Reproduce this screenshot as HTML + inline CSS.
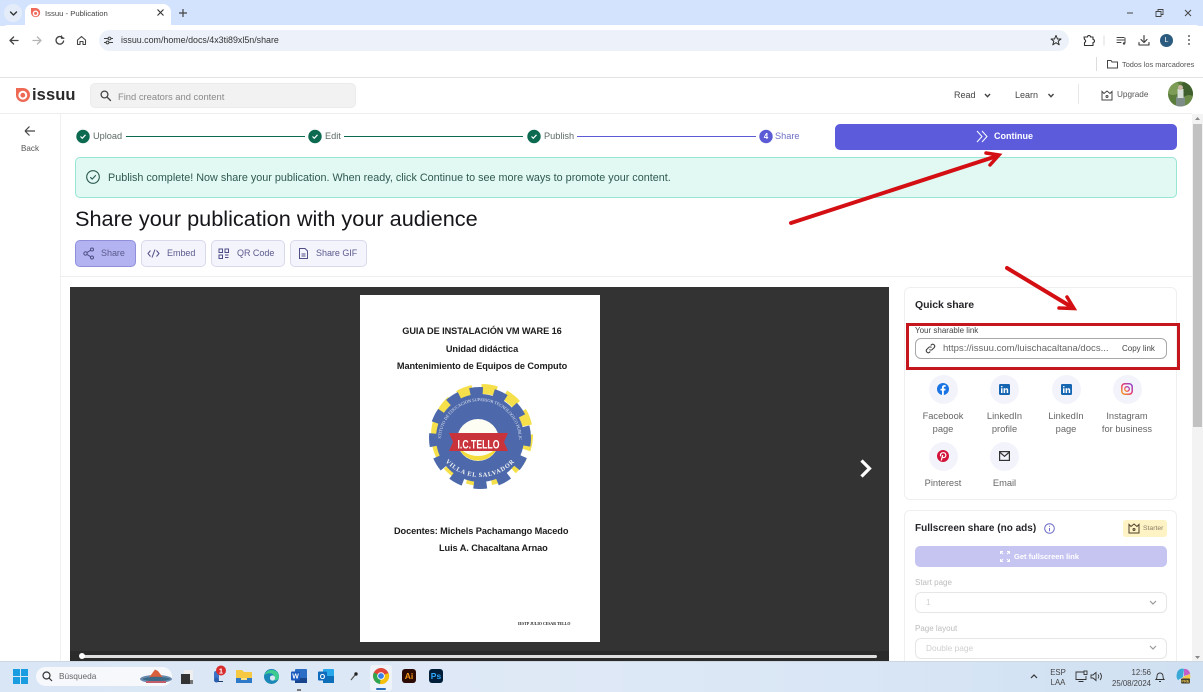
<!DOCTYPE html>
<html lang="en"><head><meta charset="utf-8"><title>Issuu - Publication</title>
<style>
html,body{margin:0;padding:0;width:1203px;height:692px;overflow:hidden;background:#fff;font-family:"Liberation Sans",sans-serif}
div,span,a{position:absolute;box-sizing:border-box;white-space:nowrap}
svg{position:absolute;overflow:visible}
.t{line-height:1;color:#555}
.c{text-align:center}
.ico{fill:none;stroke:#444;stroke-width:1.3;stroke-linecap:round;stroke-linejoin:round}
.tab{top:240px;height:27px;border-radius:5px;background:#f4f4fd;border:1px solid #d9d9ec}
.tl{font-size:9px;top:249px;color:#5b5a8c;letter-spacing:-.03px}
.step{font-size:9.2px;top:132px;color:#5d6b66}
.lab{font-size:9.3px;color:#666;text-align:center;width:70px;line-height:13px}
.circ{width:29px;height:29px;border-radius:50%;background:#f3f3fb}
.sel{left:915px;width:252px;height:21px;border:1px solid #e6e6e6;border-radius:6px;background:#fff}
.doc{font-size:9.2px;font-weight:bold;color:#1c1c1c;letter-spacing:-.08px}
</style></head><body>

<!-- browser chrome -->
<div style="left:0;top:0;width:1203px;height:26px;background:#d3e3fd"></div>
<div style="left:4px;top:4px;width:18px;height:18px;border-radius:50%;background:#e4ecf9"></div>
<svg style="left:9px;top:9px" width="9" height="9" class="ico"><path d="M1.5 3L4.5 6L7.5 3" stroke-width="1.4" stroke="#333" fill="none"/></svg>
<div style="left:25px;top:4px;width:146px;height:23px;background:#fff;border-radius:8px 8px 0 0"></div>
<svg style="left:30px;top:7px" width="11" height="12" viewBox="0 0 11 12"><path d="M1 1H6A4.6 4.6 0 1 1 1 6Z" fill="#ef6a5a"/><circle cx="5.6" cy="6.4" r="2.9" fill="#fff"/><circle cx="5.6" cy="6.4" r="1.5" fill="#ef6a5a"/></svg>
<span class="t" style="left:45px;top:9.500px;font-size:7.700px;color:#444">Issuu - Publication</span>
<svg style="left:157px;top:9px" width="7" height="7"><path d="M.5 .5L6.500 6.500M6.500 .5L.5 6.500" stroke="#333" stroke-width="1.100"/></svg>
<svg style="left:178px;top:8px" width="10" height="10"><path d="M5 1V9M1 5H9" stroke="#444" stroke-width="1.200"/></svg>
<svg style="left:1127px;top:8px" width="66" height="10"><path d="M0 5H6" stroke="#444" stroke-width="1"/><path d="M29 3.500h5v5h-5zM31 3.500v-2h5v5h-2" fill="none" stroke="#444" stroke-width=".9"/><path d="M58 2l6 6M64 2l-6 6" stroke="#444" stroke-width="1"/></svg>

<div style="left:0;top:25px;width:1203px;height:53px;background:#fff;border-radius:8px 8px 0 0"></div>
<svg style="left:9px;top:35px" width="80" height="11" viewBox="0 0 80 11" class="ico"><path d="M1 5.500H9M1 5.500L4.600 2M1 5.500L4.600 9" stroke="#444"/><path d="M24 5.500H32M32 5.500L28.400 2M32 5.500L28.400 9" stroke="#b5b5b5"/><path d="M53.500 2.600A3.800 3.800 0 1 0 54.600 6" stroke="#444"/><path d="M52.500 1V3.200H54.800" stroke="#444"/><path d="M68.500 5L72.500 1.500L76.500 5V9.500H74V6.500H71V9.500H68.500Z" stroke="#444" stroke-width="1.100"/></svg>
<div style="left:99px;top:30px;width:970px;height:21px;background:#edf2fa;border-radius:11px"></div>
<svg style="left:104px;top:36px" width="9" height="9" stroke="#444" fill="none" stroke-width="1"><path d="M0 2.500H4M7 2.500H9M0 6.500H2M5 6.500H9"/><circle cx="5.500" cy="2.500" r="1.400"/><circle cx="3.500" cy="6.500" r="1.400"/></svg>
<span class="t" style="left:121px;top:36px;font-size:8.900px;color:#333">issuu.com/home/docs/4x3ti89xl5n/share</span>
<svg style="left:1050px;top:34px" width="145" height="13" viewBox="0 0 145 13" class="ico"><path d="M6 1.500L7.500 5H11L8.200 7.200L9.200 10.800L6 8.700L2.800 10.800L3.800 7.200L1 5H4.500Z" stroke="#333" stroke-width="1"/><path d="M34 3H37.500C37.500 1 40.500 1 40.500 3H43V5.500C45 5.500 45 8.500 43 8.500V11.500H34.500V8.500C36 8 36 6 34.500 5.500Z" stroke="#333" stroke-width="1.100"/><path d="M54 2V11" stroke="#ddd" stroke-width="1"/><path d="M67 3.500H74M67 6H74M67 8.500H71" stroke="#444" stroke-width="1"/><path d="M75 4V9" stroke="#444" stroke-width="1"/><circle cx="74" cy="9.500" r="1.200" fill="#444" stroke="none"/><path d="M94 1.500V8M91 5.500L94 8.500L97 5.500M89 8.500V11H99V8.500" stroke="#333" stroke-width="1.100"/><circle cx="139" cy="2" r=".9" fill="#333" stroke="none"/><circle cx="139" cy="6" r=".9" fill="#333" stroke="none"/><circle cx="139" cy="10" r=".9" fill="#333" stroke="none"/></svg>
<div style="left:1160px;top:34px;width:13px;height:13px;border-radius:50%;background:#2b5b7e;color:#fff;font-size:7px;line-height:13px;text-align:center">L</div>
<div style="left:1096px;top:57px;width:1px;height:14px;background:#ddd"></div>
<svg style="left:1107px;top:59px" width="11" height="10"><path d="M.5 1.500H4L5 3H10.500V9H.5Z" fill="none" stroke="#444"/></svg>
<span class="t" style="left:1122px;top:60.500px;font-size:7.400px;color:#555">Todos los marcadores</span>
<div style="left:0;top:77px;width:1203px;height:1px;background:#e4e4e4"></div>

<!-- site header -->
<svg style="left:15px;top:87px" width="15" height="16" viewBox="0 0 15 16"><path d="M1 1H8A7 7 0 1 1 1 8Z" fill="#ee6a55"/><circle cx="7.800" cy="8.200" r="4.400" fill="#fff"/><circle cx="7.800" cy="8.200" r="2.400" fill="#ee6a55"/></svg>
<span class="t" style="left:32px;top:87px;font-size:16.500px;font-weight:bold;color:#2b2b2b;letter-spacing:.1px">issuu</span>
<div style="left:90px;top:83px;width:266px;height:25px;background:#f2f2f2;border:1px solid #ebebeb;border-radius:5px"></div>
<svg style="left:100px;top:90px" width="11" height="11" fill="none" stroke="#444" stroke-width="1.300"><circle cx="4.500" cy="4.500" r="3.400"/><path d="M7 7L10.500 10.500" stroke-linecap="round"/></svg>
<span class="t" style="left:118px;top:91.500px;font-size:9.400px;color:#8a8a8a">Find creators and content</span>
<span class="t" style="left:954px;top:91px;font-size:9px;color:#444">Read</span>
<span class="t" style="left:1015px;top:91px;font-size:9px;color:#444">Learn</span>
<svg style="left:984px;top:93px" width="72" height="6" fill="none" stroke="#444" stroke-width="1.400"><path d="M1 1L3.500 3.700L6 1M64.500 1L67 3.700L69.500 1"/></svg>
<div style="left:1078px;top:84px;width:1px;height:20px;background:#e8e8e8"></div>
<svg style="left:1101px;top:90px" width="12" height="11" viewBox="0 0 12 11" fill="none" stroke="#444" stroke-width="1"><path d="M1 1.500L3 3.500L6 1L9 3.500L11 1.500V10H1Z"/><circle cx="6" cy="6.500" r="1"/></svg>
<span class="t" style="left:1117px;top:91px;font-size:8.200px;color:#555">Upgrade</span>
<svg style="left:1168px;top:81px" width="25" height="26" viewBox="0 0 25 26"><defs><clipPath id="av"><circle cx="12.500" cy="13" r="12.500"/></clipPath></defs><g clip-path="url(#av)"><rect width="25" height="26" fill="#5b7d3c"/><circle cx="5" cy="7" r="7" fill="#7d9c55"/><circle cx="20" cy="8" r="8" fill="#3f5f2c"/><circle cx="21" cy="20" r="6" fill="#6b8c47"/><rect x="8" y="16" width="9" height="10" fill="#7d8c86"/><rect x="9.500" y="8" width="6" height="9" fill="#d8dfd8"/><circle cx="12.500" cy="6.500" r="2.500" fill="#c9b7a3"/></g></svg>
<div style="left:0;top:113px;width:1192px;height:1px;background:#eee"></div>

<!-- sidebar -->
<div style="left:60px;top:114px;width:1px;height:547px;background:#f0f0f0"></div>
<svg style="left:24px;top:125px" width="12" height="12" fill="none" stroke="#444" stroke-width="1.200"><path d="M1 6H11M1 6L5.500 1.500M1 6L5.500 10.500"/></svg>
<span class="t" style="left:21px;top:145px;font-size:8.100px;color:#555">Back</span>

<!-- stepper -->
<svg style="left:76px;top:129px" width="700" height="15" viewBox="0 0 700 15">
<path d="M50 7.500H229M268 7.500H447" stroke="#0c6a50" stroke-width="1"/><path d="M501 7.500H680" stroke="#5b5bd6" stroke-width="1"/>
<circle cx="7" cy="7.500" r="6.700" fill="#0c6a50"/><circle cx="239" cy="7.500" r="6.700" fill="#0c6a50"/><circle cx="458" cy="7.500" r="6.700" fill="#0c6a50"/>
<path d="M4.500 7.500L6.300 9.300L9.500 5.800M236.500 7.500L238.300 9.300L241.500 5.800M455.500 7.500L457.300 9.300L460.500 5.800" fill="none" stroke="#fff" stroke-width="1.200"/>
<circle cx="690" cy="7.500" r="6.700" fill="#5b5bd6"/></svg>
<span class="t" style="left:762px;top:132.500px;width:8px;text-align:center;font-size:8px;font-weight:bold;color:#fff">4</span>
<span class="t step" style="left:93px">Upload</span>
<span class="t step" style="left:325px">Edit</span>
<span class="t step" style="left:544px">Publish</span>
<span class="t step" style="left:775px;color:#6f6fc8">Share</span>
<div style="left:835px;top:124px;width:342px;height:26px;background:#5b5bdc;border-radius:5px"></div>
<svg style="left:976px;top:130px" width="12" height="13" fill="none" stroke="#fff" stroke-width="1"><path d="M1 1L6 6.500L1 12M6 1L11 6.500L6 12"/></svg>
<span class="t" style="left:994px;top:132px;font-size:9px;color:#fff;font-weight:bold">Continue</span>

<!-- alert -->
<div style="left:75px;top:157px;width:1102px;height:41px;background:#e2f8f3;border:1px solid #96e6d3;border-radius:5px"></div>
<svg style="left:86px;top:170px" width="14" height="14" fill="none" stroke="#27564a" stroke-width="1.100"><circle cx="7" cy="7" r="6.300"/><path d="M4.300 7.200L6.200 9.100L9.800 5.300"/></svg>
<span class="t" style="left:108px;top:172.500px;font-size:10.800px;color:#2f5a50">Publish complete! Now share your publication. When ready, click Continue to see more ways to promote your content.</span>

<span class="t" style="left:75px;top:208px;font-size:21.700px;color:#15151a">Share your publication with your audience</span>

<!-- tabs -->
<div class="tab" style="left:75px;width:61px;background:#b3b3f2;border-color:#8f8fdc"></div>
<div class="tab" style="left:141px;width:65px"></div>
<div class="tab" style="left:211px;width:74px"></div>
<div class="tab" style="left:290px;width:77px"></div>
<svg style="left:83px;top:247px" width="275" height="13" viewBox="0 0 275 13" fill="none" stroke="#4f4e86" stroke-width="1">
<circle cx="2.500" cy="6.500" r="1.700"/><circle cx="9" cy="2.500" r="1.500"/><circle cx="9" cy="10.500" r="1.500"/><path d="M4 5.500L7.600 3.300M4 7.500L7.600 9.700"/>
<path d="M67.500 3.500L65 6.500L67.500 9.500M73.500 3.500L76 6.500L73.500 9.500M72 2.500L69 10.500"/>
<path d="M136 2h3.500v3.500H136zM142 2h3.500v3.500H142zM136 8h3.500v3.500H136zM142 8h3.500M142 10.500h3.500"/>
<path d="M216.500 1.500H222L224.500 4V11.500H216.500ZM218.500 7H222.500M218.500 9H222.500"/></svg>
<span class="t tl" style="left:101px">Share</span>
<span class="t tl" style="left:167px">Embed</span>
<span class="t tl" style="left:237px">QR Code</span>
<span class="t tl" style="left:316px">Share GIF</span>
<div style="left:61px;top:276px;width:1131px;height:1px;background:#eee"></div>

<!-- viewer -->
<div style="left:70px;top:287px;width:819px;height:374px;background:#333"></div>
<div style="left:360px;top:295px;width:240px;height:347px;background:#fff"></div>
<span class="t c doc" style="left:360px;width:244px;top:327px">GUIA DE INSTALACIÓN VM WARE 16</span>
<span class="t c doc" style="left:360px;width:244px;top:344.500px">Unidad didáctica</span>
<span class="t c doc" style="left:360px;width:244px;top:362px">Mantenimiento de Equipos de Computo</span>
<span class="t doc" style="left:394px;top:526.500px">Docentes: Michels Pachamango Macedo</span>
<span class="t doc" style="left:439px;top:544px">Luis A. Chacaltana Arnao</span>
<span class="t" style="left:518px;top:623px;font-size:3.900px;font-weight:bold;font-family:'Liberation Serif',serif;color:#222">IESTP JULIO CESAR TELLO</span>

<!-- logo -->
<svg style="left:420px;top:378px" width="120" height="120" viewBox="0 0 120 120">
<defs><path id="arcT" d="M21 62A39 39 0 0 1 99 62"/><path id="arcB" d="M17 52A43 43 0 0 0 103 52"/></defs>
<circle cx="62" cy="57" r="46" fill="none" stroke="#f5e04c" stroke-width="10" stroke-dasharray="15 9"/>
<circle cx="60" cy="60" r="44" fill="#4d69ab"/>
<circle cx="60" cy="60" r="47" fill="none" stroke="#4d69ab" stroke-width="8" stroke-dasharray="13 11" stroke-dashoffset="5"/>
<circle cx="58" cy="62" r="21" fill="#fdfdf4"/>
<path d="M38 68A21 21 0 0 0 78 68A25 25 0 0 1 38 68Z" fill="#f4dc3c"/>
<path d="M29 55H88L84 64L88 73H29L33 64Z" fill="#c9343c"/>
<text x="58.500" y="70.500" text-anchor="middle" font-family="Liberation Sans" font-weight="bold" font-size="12" fill="#fff" textLength="42" lengthAdjust="spacingAndGlyphs">I.C.TELLO</text>
<text font-family="Liberation Serif" font-size="4.300" fill="#e6e9f4"><textPath href="#arcT" startOffset="50%" text-anchor="middle">INSTITUTO DE EDUCACION SUPERIOR TECNOLOGICO PUBLICO</textPath></text>
<text font-family="Liberation Serif" font-size="6.300" font-weight="bold" fill="#f2f2f2" letter-spacing=".4"><textPath href="#arcB" startOffset="50%" text-anchor="middle" dominant-baseline="hanging">VILLA EL SALVADOR</textPath></text>
</svg>

<svg style="left:859px;top:458px" width="14" height="21" fill="none" stroke="#fff" stroke-width="3.200" stroke-linejoin="miter"><path d="M2.500 2.500L10.500 10.500L2.500 18.500"/></svg>
<div style="left:70px;top:651px;width:819px;height:10px;background:#2b2b2b"></div>
<div style="left:82px;top:655px;width:795px;height:3px;background:#dfdfdf;border-radius:2px"></div>
<div style="left:79px;top:653px;width:6px;height:6px;background:#fff;border-radius:50%"></div>

<!-- quick share card -->
<div style="left:904px;top:287px;width:273px;height:213px;border:1px solid #efefef;border-radius:6px;background:#fff"></div>
<span class="t" style="left:915px;top:299.500px;font-size:10.500px;font-weight:bold;color:#25252b;letter-spacing:-.1px">Quick share</span>
<span class="t" style="left:915px;top:327px;font-size:8px;color:#444">Your sharable link</span>
<div style="left:915px;top:338px;width:252px;height:21px;border:1px solid #a8a8a8;border-radius:6px"></div>
<svg style="left:925px;top:343px" width="11" height="11" fill="none" stroke="#444" stroke-width="1.100"><path d="M4.500 6.500A2 2 0 0 0 7.300 6.500L9.300 4.500A2 2 0 0 0 6.500 1.700L5.700 2.500M6.500 4.500A2 2 0 0 0 3.700 4.500L1.700 6.500A2 2 0 0 0 4.500 9.300L5.300 8.500"/></svg>
<span class="t" style="left:943px;top:344px;font-size:9.550px;color:#666">https://issuu.com/luischacaltana/docs...</span>
<span class="t" style="left:1122px;top:344.500px;font-size:8px;color:#444">Copy link</span>
<div style="left:906px;top:323px;width:274px;height:47px;border:3px solid #c4161c"></div>

<div class="circ" style="left:928.500px;top:375px"></div>
<div class="circ" style="left:990px;top:375px"></div>
<div class="circ" style="left:1051.500px;top:375px"></div>
<div class="circ" style="left:1112.500px;top:375px"></div>
<div class="circ" style="left:928.500px;top:442px"></div>
<div class="circ" style="left:990px;top:442px"></div>
<svg style="left:937px;top:383px" width="12" height="12" viewBox="0 0 12 12"><circle cx="6" cy="6" r="6" fill="#1b74e4"/><path d="M6.800 12V7.500H8.300L8.600 5.700H6.800V4.700C6.800 4.100 7.100 3.800 7.700 3.800H8.700V2.300C7 1.900 5 2.200 5 4.500V5.700H3.500V7.500H5V12Z" fill="#fff"/></svg>
<svg style="left:999px;top:384px" width="11" height="11" viewBox="0 0 11 11"><rect width="11" height="11" rx="1.200" fill="#1766b2"/><path d="M2 4.300H3.500V9H2ZM2 2H3.500V3.300H2ZM4.600 4.300H6V5C6.800 3.800 9.200 3.900 9.200 6V9H7.700V6.500C7.700 5 6.100 5.100 6.100 6.500V9H4.600Z" fill="#fff"/></svg>
<svg style="left:1060.500px;top:384px" width="11" height="11" viewBox="0 0 11 11"><rect width="11" height="11" rx="1.200" fill="#1766b2"/><path d="M2 4.300H3.500V9H2ZM2 2H3.500V3.300H2ZM4.600 4.300H6V5C6.800 3.800 9.200 3.900 9.200 6V9H7.700V6.500C7.700 5 6.100 5.100 6.100 6.500V9H4.600Z" fill="#fff"/></svg>
<svg style="left:1121px;top:383px" width="12" height="12" viewBox="0 0 12 12" fill="none"><defs><linearGradient id="ig" x1="0" y1="1" x2="1" y2="0"><stop offset="0" stop-color="#f5a623"/><stop offset=".5" stop-color="#e8386d"/><stop offset="1" stop-color="#8a49d6"/></linearGradient></defs><rect x=".8" y=".8" width="10.400" height="10.400" rx="3" stroke="url(#ig)" stroke-width="1.500"/><circle cx="6" cy="6" r="2.300" stroke="url(#ig)" stroke-width="1.300"/></svg>
<svg style="left:937px;top:450px" width="12" height="12" viewBox="0 0 12 12"><circle cx="6" cy="6" r="6" fill="#d2143a"/><path d="M4.300 10.500L5.700 5M3.700 6.300C2.800 3.500 5 2.500 6.500 2.700C9 3 9.300 5.300 8.400 6.700C7.600 7.900 5.800 7.800 5.300 6.800" fill="none" stroke="#fff" stroke-width="1.200"/></svg>
<svg style="left:999px;top:451px" width="11" height="10" fill="none" stroke="#333" stroke-width="1.200"><rect x=".6" y=".6" width="9.800" height="8.800"/><path d="M.6 1L5.500 5.300L10.400 1"/></svg>
<span class="t lab" style="left:908px;top:410px">Facebook<br>page</span>
<span class="t lab" style="left:969.500px;top:410px">LinkedIn<br>profile</span>
<span class="t lab" style="left:1031px;top:410px">LinkedIn<br>page</span>
<span class="t lab" style="left:1092px;top:410px">Instagram<br>for business</span>
<span class="t lab" style="left:908px;top:477px">Pinterest</span>
<span class="t lab" style="left:969.500px;top:477px">Email</span>

<!-- fullscreen card -->
<div style="left:904px;top:510px;width:273px;height:160px;border:1px solid #efefef;border-radius:6px;background:#fff"></div>
<span class="t" style="left:915px;top:524px;font-size:10px;font-weight:bold;color:#25252b">Fullscreen share (no ads)</span>
<svg style="left:1044px;top:523px" width="11" height="11" fill="none" stroke="#6d6dc8" stroke-width="1"><circle cx="5.500" cy="5.500" r="4.800"/><path d="M5.500 5V8.300M5.500 2.800V3.800"/></svg>
<div style="left:1123px;top:520px;width:44px;height:17px;background:#fdf3c4;border-radius:3px"></div>
<svg style="left:1128px;top:523px" width="12" height="11" viewBox="0 0 12 11" fill="none" stroke="#4b3f2a" stroke-width="1"><path d="M1 1.500L3 3.500L6 1L9 3.500L11 1.500V10H1Z"/><circle cx="6" cy="6.500" r="1"/></svg>
<span class="t" style="left:1143px;top:526px;font-size:6.800px;color:#8c8069">Starter</span>
<div style="left:915px;top:546px;width:252px;height:21px;background:#c6c5f2;border-radius:5px"></div>
<svg style="left:1000px;top:551px" width="10" height="11" fill="none" stroke="#fff" stroke-width="1"><path d="M.5 3V.5H3M7 .5H9.500V3M.5 8V10.500H3M7 10.500H9.500V8M.5 .5L3 3M9.500 .5L7 3M.5 10.500L3 8M9.500 10.500L7 8"/></svg>
<span class="t" style="left:1014px;top:552.500px;font-size:7.500px;font-weight:bold;color:#fff">Get fullscreen link</span>
<span class="t" style="left:915px;top:579px;font-size:8px;color:#bcbcbc">Start page</span>
<div class="sel" style="top:592px"></div>
<span class="t" style="left:926px;top:599px;font-size:8px;color:#d0d0d0">1</span>
<span class="t" style="left:915px;top:625px;font-size:8px;color:#bcbcbc">Page layout</span>
<div class="sel" style="top:638px"></div>
<span class="t" style="left:926px;top:644px;font-size:8.300px;color:#cfcfcf">Double page</span>
<svg style="left:1149px;top:600px" width="8" height="52" fill="none" stroke="#999" stroke-width="1.200"><path d="M1 1L4 4L7 1M1 46L4 49L7 46"/></svg>

<!-- scrollbar -->
<div style="left:1192px;top:114px;width:11px;height:547px;background:#f3f3f3"></div>
<div style="left:1193px;top:124px;width:9px;height:303px;background:#c2c2c2"></div>
<svg style="left:1194px;top:116px" width="7" height="544" fill="#888"><path d="M3.500 1L6 4H1ZM1 540H6L3.500 543Z"/></svg>

<!-- taskbar -->
<div style="left:0;top:661px;width:1203px;height:31px;background:linear-gradient(90deg,#d9e6f5 0,#dfe9f6 45%,#d9e6f5 70%,#cfe0f2 100%);border-top:1px solid #cdd7e2"></div>
<svg style="left:13px;top:669px" width="15" height="15" viewBox="0 0 15 15"><path d="M0 0H7V7H0ZM8 0H15V7H8ZM0 8H7V15H0ZM8 8H15V15H8Z" fill="#1a9de0"/></svg>
<div style="left:36px;top:667px;width:136px;height:19px;background:#f6f8fc;border-radius:10px"></div>
<svg style="left:42px;top:671px" width="11" height="11" fill="none" stroke="#333" stroke-width="1.200"><circle cx="4.500" cy="4.500" r="3.500"/><path d="M7 7L10 10"/></svg>
<span class="t" style="left:59px;top:672px;font-size:8.300px;color:#666">Búsqueda</span>
<svg style="left:140px;top:668px" width="33" height="17" viewBox="0 0 33 17"><ellipse cx="16" cy="11" rx="16" ry="4" fill="#6a8bb0"/><path d="M8 11L15 1.500L18 3L24 11Z" fill="#d9603c"/><path d="M2 11C8 8 24 8 31 11C24 14 8 14 2 11Z" fill="#3d6a86"/><rect x="6" y="13" width="20" height="2" fill="#c25d6e"/></svg>
<svg style="left:181px;top:670px" width="12" height="14"><rect x="3" y="0" width="9" height="11" fill="#eee"/><rect y="4" width="9" height="10" fill="#333"/><rect x="9" y="10" width="3" height="4" fill="#777"/></svg>
<svg style="left:211px;top:665px" width="17" height="19" viewBox="0 0 17 19"><rect x="3" y="6" width="5" height="9" rx="2" fill="#3a74c9"/><circle cx="5.500" cy="15" r="2.500" fill="#2a5fb0"/><rect x="7" y="16" width="5" height="1" fill="#1d3c6b"/><circle cx="10" cy="5.500" r="5" fill="#d92c2c"/><text x="10" y="8.300" text-anchor="middle" font-family="Liberation Sans" font-weight="bold" font-size="7.500" fill="#fff">1</text></svg>
<svg style="left:236px;top:669px" width="16" height="14"><path d="M0 1H6L8 3H16V14H0Z" fill="#f6c945"/><rect y="9" width="16" height="5" fill="#2f79c9"/><rect x="5" y="9" width="6" height="2" fill="#f6e08a"/></svg>
<svg style="left:264px;top:669px" width="15" height="15" viewBox="0 0 15 15"><circle cx="7.500" cy="7.500" r="7.500" fill="#1b86b8"/><path d="M15 8C15 4 12 1 7.500 1C4 1 1 3.500 .5 6C3 3.500 9 3.500 10 7H6C6 11 10 12.500 14 10.500Z" fill="#3ecb8f"/><circle cx="8.500" cy="9" r="2.600" fill="#dbe7f4"/></svg>
<svg style="left:291px;top:669px" width="16" height="14"><rect x="4" y="0" width="12" height="14" rx="1" fill="#2b6cc4"/><rect x="4" y="9" width="12" height="5" fill="#17448c"/><rect width="9" height="9" y="2.500" rx="1" fill="#185abd"/><text x="4.500" y="9.700" text-anchor="middle" font-family="Liberation Sans" font-weight="bold" font-size="7" fill="#fff">W</text></svg>
<div style="left:297px;top:689px;width:4px;height:1.500px;background:#777"></div>
<svg style="left:318px;top:669px" width="16" height="14"><rect x="5" y="0" width="11" height="14" rx="1" fill="#28a8ea"/><rect x="5" y="7" width="11" height="7" fill="#0d6fb8"/><rect y="2.500" width="9" height="9" rx="1" fill="#0f6cbd"/><text x="4.500" y="9.900" text-anchor="middle" font-family="Liberation Sans" font-weight="bold" font-size="7" fill="#fff">O</text></svg>
<svg style="left:350px;top:672px" width="8" height="9"><path d="M1 8L5 3" stroke="#555" stroke-width="1.200"/><circle cx="6" cy="2" r="1.700" fill="#222"/></svg>
<div style="left:370px;top:665px;width:22px;height:26px;background:#eef3fa;border-radius:3px"></div>
<svg style="left:373px;top:668px" width="16" height="16" viewBox="0 0 16 16"><circle cx="8" cy="8" r="8" fill="#e0473a"/><path d="M8 8L1 4.500A8 8 0 0 0 7 16Z" fill="#2ea84f"/><path d="M8 8L15.500 5A8 8 0 0 1 7 16Z" fill="#f4c20d"/><circle cx="8" cy="8" r="3.800" fill="#fff"/><circle cx="8" cy="8" r="2.900" fill="#3a7fe8"/></svg>
<div style="left:376px;top:688px;width:10px;height:2px;background:#2a6fb8;border-radius:1px"></div>
<div style="left:402px;top:669px;width:14px;height:14px;background:#2b0b03;border-radius:3px;color:#f79a1c;font-size:8.500px;font-weight:bold;line-height:14px;text-align:center">Ai</div>
<div style="left:429px;top:669px;width:14px;height:14px;background:#011f38;border-radius:3px;color:#31a8ff;font-size:8.500px;font-weight:bold;line-height:14px;text-align:center">Ps</div>

<svg style="left:1030px;top:674px" width="8" height="5" fill="none" stroke="#333" stroke-width="1.200"><path d="M1 4L4 1L7 4"/></svg>
<span class="t c" style="left:1046px;width:24px;top:667.500px;font-size:7.800px;color:#444;line-height:10.500px">ESP<br>LAA</span>
<svg style="left:1075px;top:670px" width="33" height="13" fill="none" stroke="#333" stroke-width=".9"><path d="M9 2H1V9.500H11V6M3.500 11.500H8.500"/><rect x="9" y="1" width="3" height="3.500"/><path d="M16 5V8H18L21 10.500V2.500L18 5ZM23 4.500A3 3 0 0 1 23 8.500M25 3A5 5 0 0 1 25 10"/></svg>
<span class="t" style="left:1112px;width:39px;text-align:right;top:668px;font-size:7.800px;color:#444;line-height:10.500px">12:56<br>25/08/2024</span>
<svg style="left:1155px;top:671px" width="10" height="12" fill="none" stroke="#333" stroke-width=".9"><path d="M1 8.500C2 7.500 2 6.500 2 5A3 3 0 0 1 8 5C8 6.500 8 7.500 9 8.500ZM4 10.500H6"/></svg>
<svg style="left:1176px;top:668px" width="15" height="16" viewBox="0 0 15 16"><path d="M1 5C2 1 6 0 8 1L7 9L2 12C0 10 .5 7 1 5Z" fill="#3aa9d8"/><path d="M8 1C11 .5 14 3 14 6L8 8Z" fill="#c45fc9"/><path d="M7 9L14 6C15 9 14 13 11 14L5 14Z" fill="#f1c84a"/><rect x="5" y="10.500" width="9" height="5" rx="1" fill="#3c3c30"/><text x="9.500" y="14.500" text-anchor="middle" font-family="Liberation Sans" font-weight="bold" font-size="4" fill="#f1c84a">PRE</text></svg>

<!-- annotation arrows -->
<svg style="left:0;top:0" width="1203" height="692" viewBox="0 0 1203 692" fill="none" stroke="#d40f14" stroke-width="4" stroke-linecap="round" stroke-linejoin="miter">
<path d="M791 223L994 157"/><path d="M986 153L999 155L990 165" stroke-width="3.500"/>
<path d="M1007 268L1070 306"/><path d="M1067 297L1074 308.500L1059 308" stroke-width="3.500"/>
</svg>
</body></html>
